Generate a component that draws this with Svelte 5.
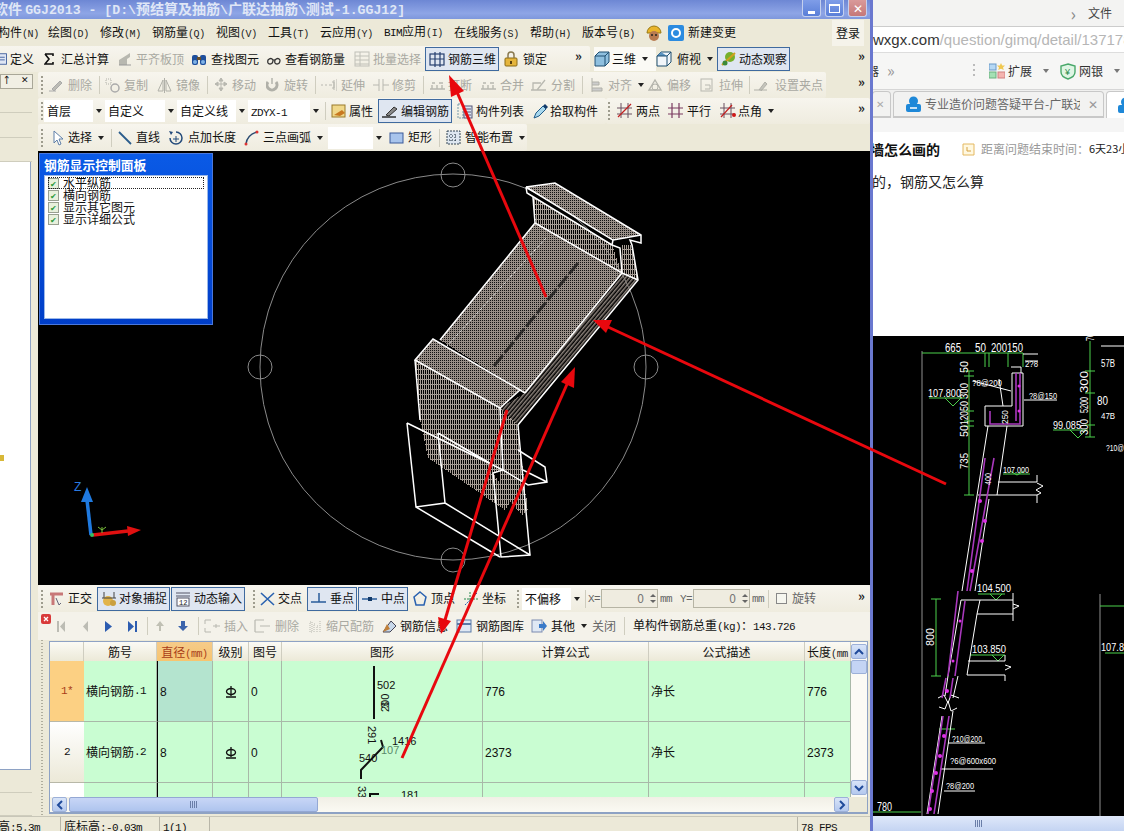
<script>
  const segs = (t) => String(t).match(/[\x00-\x7f]+|[^\x00-\x7f]+/g) || [];
  const isLat = (s) => /^[\x00-\x7f]/.test(s);

  const T = (x, lx, i, t, o = {}) => ({ x, lx, i, t, ...o });
  const S = (x) => ({ x, sep: true });
  const G = (x) => ({ x, grip: true });
  const C = (x, end, t) => ({ x, end, t, combo: true });

  // a band: flow of items, widths derived from the start of the next one
  function band(start, end, items, cls = '') {
    return {
      start, end, cls,
      items: items.map((it, k) => {
        const next = k + 1 < items.length ? items[k + 1].x : end;
        return { ...it, w: next - it.x, gapBefore: k === 0 ? it.x - start : 0 };
      })
    };
  }

  const menu = [
    ['构件', '(N)', 50], ['绘图', '(D)', 52], ['修改', '(M)', 52], ['钢筋量', '(Q)', 64], ['视图', '(V)', 52],
    ['工具', '(T)', 52], ['云应用', '(Y)', 64], ['BIM应用', '(I)', 70], ['在线服务', '(S)', 76], ['帮助', '(H)', 52], ['版本号', '(B)', 63]
  ];

  const row1 = [
    band(-4, 590, [
      T(-4, 10, 'def', '定义'),
      T(44, 61, 'sigma', '汇总计算'),
      T(117, 136, 'align', '平齐板顶', { d: 1 }),
      T(191, 211, 'find', '查找图元'),
      T(267, 285, 'glass', '查看钢筋量'),
      T(354, 373, 'batch', '批量选择', { d: 1 }),
      T(425, 448, 'grid3', '钢筋三维', { on: 1 }),
      T(504, 523, 'lock', '锁定'),
      { x: 575, more: true }
    ], 'lite'),
    band(590, 870, [
      T(594, 612, 'cube', '三维', { arrow: 1 }),
      T(656, 677, 'cube2', '俯视', { arrow: 1 }),
      T(717, 739, 'orbit', '动态观察', { on: 1 }),
      { x: 858, more: true }
    ], 'withhi')
  ];

  const row2 = [
    band(38, 826, [
      G(41),
      T(48, 68, 'del', '删除', { d: 1 }), S(99),
      T(105, 124, 'copy', '复制', { d: 1 }),
      T(157, 176, 'mirror', '镜像', { d: 1 }), S(207),
      T(214, 232, 'move', '移动', { d: 1 }),
      T(266, 284, 'rot', '旋转', { d: 1 }), S(315),
      T(321, 341, 'ext', '延伸', { d: 1 }),
      T(373, 392, 'trim', '修剪', { d: 1 }), S(423),
      T(430, 448, 'brk', '打断', { d: 1 }),
      T(481, 500, 'brk', '合并', { d: 1 }),
      T(531, 551, 'split', '分割', { d: 1 }), S(582),
      T(590, 608, 'alignl', '对齐', { d: 1, arrow: 1 }),
      T(648, 667, 'offset', '偏移', { d: 1 }),
      T(699, 719, 'stretch', '拉伸', { d: 1 }), S(749),
      T(753, 775, 'grip', '设置夹点', { d: 1 })
    ], 'lite'),
    band(826, 870, [{ x: 858, more: true }])
  ];

  const row3 = [
    band(38, 606, [
      G(41),
      C(44, 105, '首层'), C(105, 177, '自定义'), C(177, 248, '自定义线'), C(248, 322, 'ZDYX-1'),
      S(325),
      T(331, 349, 'prop', '属性'),
      T(378, 401, 'edit', '编辑钢筋', { on: 1 }),
      T(457, 476, 'list', '构件列表'),
      T(533, 550, 'pick', '拾取构件')
    ], 'lite'),
    band(606, 870, [
      G(608),
      T(617, 636, 'twop', '两点'),
      T(668, 687, 'para', '平行'),
      T(720, 738, 'ang', '点角', { arrow: 1 }),
      { x: 858, more: true }
    ], 'lite')
  ];

  const row4 = [
    band(38, 527, [
      G(41),
      T(52, 68, 'sel', '选择', { arrow: 1 }), S(111),
      T(118, 136, 'line', '直线'),
      T(168, 188, 'addl', '点加长度'),
      T(244, 263, 'arc', '三点画弧', { arrow: 1 }),
      C(328, 385, ''),
      T(389, 408, 'rect', '矩形'), S(439),
      T(446, 465, 'smart', '智能布置', { arrow: 1 })
    ], 'lite')
  ];

  const snap = [
    band(38, 870, [
      G(41),
      T(49, 68, 'ortho', '正交'),
      T(97, 119, 'osnap', '对象捕捉', { on: 1 }),
      T(171, 194, 'dyn', '动态输入', { on: 1 }),
      G(253),
      T(260, 278, 'cross', '交点'),
      T(307, 330, 'perp', '垂点', { on: 1 }),
      T(358, 381, 'mid', '中点', { on: 1 }),
      T(413, 431, 'vert', '顶点'),
      T(463, 482, 'coord', '坐标'),
      G(517),
      C(522, 583, '不偏移'),
      S(585),
      { x: 588, plain: 'X=' },
      { x: 601, spin: 57 },
      { x: 660, plain: 'mm' },
      { x: 680, plain: 'Y=' },
      { x: 693, spin: 57 },
      { x: 752, plain: 'mm' },
      S(768),
      { x: 776, check: true },
      { x: 792, plain: '旋转' },
      { x: 858, more: true }
    ], 'lite')
  ];

  const rebar = [
    band(38, 870, [
      { x: 40, closer: true },
      T(56, 82, 'first', ''),
      T(82, 105, 'prev', ''),
      T(105, 128, 'next', ''),
      T(128, 147, 'last', ''), S(147),
      T(155, 178, 'up', ''),
      T(178, 198, 'down', ''), S(198),
      T(204, 224, 'ins', '插入', { d: 1 }),
      T(254, 275, 'rm', '删除', { d: 1 }),
      T(308, 326, 'scale', '缩尺配筋', { d: 1 }),
      T(382, 400, 'info', '钢筋信息'),
      T(456, 476, 'lib', '钢筋图库'),
      T(531, 551, 'other', '其他', { arrow: 1 }),
      { x: 592, plain: '关闭' }, S(624),
      { x: 633, plain: '单构件钢筋总重(kg)：143.726' }
    ], 'lite2')
  ];

  const ICONS = {
    def: '<rect x="0" y="2" width="12" height="12" fill="#dfe6f4" stroke="#3a5a9a"/><path d="M2 6h8M2 9h8" stroke="#3a5a9a"/>',
    sigma: '<path d="M1 3h8v2M1 3l4 5-4 5h8v-2" fill="none" stroke="#111" stroke-width="1.6"/>',
    align: '<path d="M2 14V9l8-5 3-2v4l-3 2v6z" fill="#b8b8b0"/><path d="M2 14h12" stroke="#999"/>',
    find: '<rect x="1" y="4" width="6" height="10" rx="2" fill="#1f4f9c"/><rect x="9" y="4" width="6" height="10" rx="2" fill="#1f4f9c"/><rect x="6" y="6" width="4" height="3" fill="#6a4f2a"/><circle cx="4" cy="11" r="2" fill="#7fb2e6"/><circle cx="12" cy="11" r="2" fill="#7fb2e6"/>',
    glass: '<path d="M1 9q3-3 5 0q0 4-3 4t-2-4zM8 9q3-3 5 0q0 4-3 4t-2-4z" fill="none" stroke="#333" stroke-width="1.3"/><path d="M6 9h2" stroke="#333"/>',
    batch: '<g stroke="#c0c0b8" fill="none"><rect x="1" y="1" width="14" height="14"/><path d="M1 5h14M1 9h14M1 13h14M6 1v14"/></g>',
    grid3: '<g stroke="#27406f" fill="none" stroke-width="1.2"><rect x="1" y="3" width="14" height="11"/><path d="M1 8h14M6 1v15M11 1v15"/></g>',
    lock: '<rect x="1" y="7" width="12" height="8" rx="1" fill="#e5b53c" stroke="#8a6a14"/><path d="M4 7V4a3 3 0 016 0v3" fill="none" stroke="#8a7a50" stroke-width="1.5"/><rect x="6" y="10" width="2" height="3" fill="#5a4210"/>',
    cube: '<path d="M1 5l4-4h10v10l-4 4H1z" fill="#8fc0df" stroke="#1f4f70"/><path d="M1 5h10v10M11 5l4-4" fill="none" stroke="#1f4f70"/>',
    cube2: '<path d="M1 5l4-4h10v10l-4 4H1z" fill="#f2f6fa" stroke="#1f4f70"/><path d="M5 1l6 4h-10z" fill="#5b93c0"/><path d="M1 5h10v10M11 5l4-4" fill="none" stroke="#1f4f70"/>',
    orbit: '<circle cx="9" cy="6" r="5" fill="#77b02c"/><path d="M1 14L14 2" stroke="#d0a020" stroke-width="2"/><circle cx="4" cy="12" r="2.5" fill="#3d8a38"/>',
    del: '<path d="M1 14h7M4 12l8-8 2 2-8 8z" fill="#bcbcb4" stroke="#aaa"/>',
    copy: '<rect x="1" y="2" width="5" height="5" fill="none" stroke="#b0b0a8" stroke-dasharray="1 1"/><circle cx="10" cy="11" r="4" fill="none" stroke="#aaa" stroke-width="1.5"/>',
    mirror: '<path d="M1 14L6 3v11zM14 14L9 3v11zM7.5 1v15" fill="none" stroke="#b0b0a8"/>',
    move: '<path d="M7 1v13M1 7h12M7 1L5 4h4zM7 14l-2-3h4zM1 7l3-2v4zM13 7l-3-2v4z" stroke="#b8b8b0" fill="#b8b8b0"/>',
    rot: '<path d="M2 5a5 5 0 108 0" fill="none" stroke="#b0b0a8" stroke-width="3"/><path d="M6 1v6" stroke="#c4c4bc" stroke-width="2"/>',
    ext: '<path d="M0 8h2M4 8h2M8 8h3M13 3v10M16 2v12M11 5h2v6h-2" fill="none" stroke="#b8b8b0"/>',
    trim: '<path d="M0 8h6M10 8h6M6 2v12M10 2v12" fill="none" stroke="#b8b8b0"/>',
    brk: '<path d="M0 12h15M2 12V8M7 12V8M12 12V8M2 6h3M9 6h4" fill="none" stroke="#b8b8b0" stroke-width="1.4"/>',
    split: '<path d="M0 13h15M2 13V6h8M6 13l8-10" fill="none" stroke="#b8b8b0" stroke-width="1.3"/>',
    alignl: '<path d="M2 1v14M2 5h7v3H2M2 11h10v3H2" fill="#ccc" stroke="#b0b0a8"/>',
    offset: '<path d="M1 13L7 3l6 10z" fill="none" stroke="#b4b4ac" stroke-width="1.4"/><circle cx="7" cy="10" r="3" fill="none" stroke="#b4b4ac"/>',
    stretch: '<rect x="2" y="2" width="11" height="12" fill="none" stroke="#b8b8b0"/><path d="M6 8h5v4H6" fill="none" stroke="#b8b8b0"/>',
    grip: '<path d="M1 13h13M6 13l6-8 2 2-6 7" fill="#c4c4bc" stroke="#b0b0a8"/>',
    prop: '<rect x="1" y="2" width="13" height="12" fill="#f0d88a" stroke="#9a7a2a"/><path d="M3 12l8-5 3 3-5 3z" fill="#c87820"/>',
    edit: '<path d="M0 14h14" stroke="#222" stroke-width="1.4"/><path d="M4 12l8-8 3 2-8 7z" fill="#888" stroke="#333"/>',
    list: '<rect x="1" y="1" width="5" height="14" fill="none" stroke="#79a" stroke-dasharray="2 1"/><rect x="7" y="3" width="8" height="12" fill="#dce6f2" stroke="#557"/><path d="M8 6h6M8 9h6M8 12h6" stroke="#557"/>',
    pick: '<path d="M1 15l2-5 7-7 3 3-7 7z" fill="#a8d8ee" stroke="#1f5a88"/><path d="M10 3l2-2 3 3-2 2z" fill="#123a6a"/>',
    twop: '<path d="M4 0v15M11 0v15M0 5h15M0 11h15" stroke="#6a5060"/><path d="M1 14L14 1" stroke="#c22020" stroke-width="1.2"/>',
    para: '<path d="M4 0v15M11 0v15M0 5h15M0 11h15" stroke="#7a3a60" stroke-width="1.2"/>',
    ang: '<path d="M4 0v15M11 0v15M0 5h15M0 11h15" stroke="#6a5060"/><path d="M1 14L12 2" stroke="#c22020" stroke-width="1.2"/><circle cx="14" cy="12" r="2" fill="#d01818"/>',
    sel: '<path d="M2 1v12l3-3 2 5 2-1-2-5h4z" fill="#fff" stroke="#5f7fa8"/>',
    line: '<path d="M1 2l12 12" stroke="#2a5c8c" stroke-width="1.8"/>',
    addl: '<path d="M8 2a6 6 0 11-6 6" fill="none" stroke="#234a7a" stroke-width="1.5"/><path d="M8 6v6M5 9h6" stroke="#234a7a"/><path d="M1 1l4 1-2 3z" fill="#234a7a"/>',
    arc: '<path d="M2 14Q3 5 13 2" fill="none" stroke="#2a4a70" stroke-width="1.5"/><circle cx="2" cy="14" r="1.5" fill="#d33"/><circle cx="13" cy="2" r="1.5" fill="#d33"/>',
    rect: '<rect x="1" y="3" width="13" height="10" fill="#a8c4ec" stroke="#3a5a9a"/>',
    smart: '<rect x="1" y="1" width="13" height="13" fill="#dde6f0" stroke="#345" stroke-dasharray="2 1"/><path d="M5 4v7M9 4v7M3 6h9M3 10h9" stroke="#123" stroke-dasharray="1 2"/>',
    ortho: '<path d="M1 3h13M4 3v11" stroke="#c87878" stroke-width="3" fill="none"/><path d="M7 7l3 7 2-2" fill="#eee" stroke="#667"/>',
    osnap: '<path d="M3 1v6M13 1v6" stroke="#444"/><circle cx="7" cy="10" r="5" fill="#e2b44a"/><circle cx="12" cy="12" r="3" fill="#caa040"/><path d="M1 7h14" stroke="#444"/>',
    dyn: '<path d="M1 2h14M1 5h14" stroke="#556" fill="none"/><rect x="2" y="7" width="12" height="8" fill="#fff" stroke="#556"/><text x="4" y="14" font-size="7" font-family="Liberation Mono" fill="#222">12</text>',
    cross: '<path d="M1 2l13 12M14 2L1 14" stroke="#2a62b0" stroke-width="1.6"/>',
    perp: '<path d="M0 11h15M8 2v9" stroke="#2a5c9a" stroke-width="1.5"/>',
    mid: '<path d="M0 8h15" stroke="#2a5c9a" stroke-width="1.5"/><rect x="6" y="6" width="4" height="4" fill="#123a6a"/>',
    vert: '<path d="M7 1l6 5-2 8H3L1 6z" fill="none" stroke="#2a62b0" stroke-width="1.5"/>',
    coord: '<path d="M7 1v14M1 8h14" stroke="#2a8a50" stroke-dasharray="2 1"/><path d="M2 14l12-12" stroke="#2a62b0" stroke-dasharray="2 1"/>',
    first: '<path d="M1 1h2v11H1zM9 1v11L4 6.5z" fill="#bcbcb4" transform="translate(0 2)"/>',
    prev: '<path d="M6 3v11L1 8.5z" fill="#bcbcb4"/>',
    next: '<path d="M0 3v11l7-5.5z" fill="#2c5cb0"/>',
    last: '<path d="M0 3v11l6-5.5zM7 3h2v11H7z" fill="#2c5cb0"/>',
    up: '<path d="M4 13V8H1l4-5 4 5H6v5z" fill="#c0c0b4"/>',
    down: '<path d="M3 3v5H0l5 5 5-5H7V3z" fill="#3c64ac"/>',
    ins: '<path d="M1 2h6M1 14h6M1 2v4M1 10v4M9 8h7M12 6v4" fill="none" stroke="#b8b8b0"/>',
    rm: '<path d="M1 2h9M1 14h9M1 2v12M6 8h10" fill="none" stroke="#b8b8b0" stroke-width="1.2"/>',
    scale: '<path d="M2 14V4h2v10zM6 14V6h1M9 14V8h1M12 14V2" stroke="#b8b8b0" fill="none" stroke-dasharray="1 1"/>',
    info: '<path d="M1 14L9 3l5 5-6 6z" fill="#c8d8ea" stroke="#445"/><path d="M1 14l4-8 3 5z" fill="#c0803a"/>',
    lib: '<rect x="1" y="2" width="14" height="12" fill="#dfe8f4" stroke="#5a7aa8"/><path d="M1 6h14" stroke="#5a7aa8" stroke-width="2"/>',
    other: '<rect x="1" y="2" width="10" height="12" fill="#dfe8f4" stroke="#7a8ab0"/><path d="M8 6h4V3l4 5-4 5v-3H8z" fill="#3a7ac8"/>'
  };

  const cols = [
    { t: '筋号' }, { t: '直径', u: '(mm)', cur: 1 }, { t: '级别' }, { t: '图号' }, { t: '图形' },
    { t: '计算公式' }, { t: '公式描述' }, { t: '长度', u: '(mm' }
  ];

  const cadLabels = [
    [945, 351, 16, '665', 12], [975, 351, 11, '50', 12], [991, 351, 32, '200150', 12], [1025, 366, 13, '2?8', 9],
    [928, 396, 33, '107.800', 11], [972, 385, 30, '?8@200', 9], [1029, 398, 28, '?8@150', 9], [1053, 428, 28, '99.085', 11],
    [1003, 472, 26, '107.000', 9], [977, 591, 34, '104.500', 11], [972, 652, 34, '103.850', 11], [952, 741, 30, '?10@200', 9],
    [950, 763, 46, '?6@600x600', 9], [946, 788, 28, '?8@200', 9], [877, 810, 15, '780', 12], [1101, 366, 14, '57B', 10],
    [1101, 418, 14, '47B', 9], [1097, 404, 11, '80', 12], [1106, 450, 18, '?10@', 9], [1101, 650, 23, '107.8', 11]
  ];
  const cadV = [
    [968, 372, 12, '50', 11], [968, 398, 16, '300', 11], [968, 410, 10, '50', 11], [968, 424, 14, '120', 11], [968, 436, 12, '50', 11],
    [968, 468, 16, '735', 11], [1008, 423, 14, '250', 9], [991, 484, 12, '400', 9], [934, 645, 18, '800', 11], [1094, 340, 8, '70', 11],
    [1088, 392, 22, '300', 11], [1088, 412, 16, '5200', 11], [1088, 434, 16, '300', 11]
  ];
</script>

{#snippet txt(t)}
  {#each segs(t) as s}<span class:lat={isLat(s)}>{s}</span>{/each}
{/snippet}

{#snippet grade()}
  <svg width="12" height="12" viewBox="0 0 12 12"><ellipse cx="6" cy="5.5" rx="4.5" ry="3" fill="none" stroke="#111" stroke-width="1.3"/><path d="M6 0v10M1 11h10" stroke="#111" stroke-width="1.3"/></svg>
{/snippet}

{#snippet bandView(b)}
  <div class="band {b.cls}" style:width="{b.end - b.start}px" style:padding-left="{b.items[0].gapBefore}px" style:margin-left="{Math.min(b.start, 0)}px">
    {#each b.items as it}
      <div class="slot" style:width="{it.w}px">
        {#if it.sep}
          <i class="sep"></i>
        {:else if it.grip}
          <i class="gripper"></i>
        {:else if it.more}
          <span class="more">»</span>
        {:else if it.combo}
          <div class="combo" style:width="{it.end - it.x - 12}px">{@render txt(it.t)}</div>
          <span class="caret comboc"></span>
        {:else if it.plain}
          <span class="plain" class:grey={it.plain.length < 3}>{@render txt(it.plain)}</span>
        {:else if it.spin}
          <div class="spin" style:width="{it.spin}px"><span>0</span><b class="sp"><i></i><i class="dn"></i></b></div>
        {:else if it.check}
          <i class="chk"></i>
        {:else if it.closer}
          <svg class="closer" width="10" height="10" viewBox="0 0 10 10"><rect width="10" height="10" rx="2" fill="#d83a3a"/><path d="M3 3l4 4M7 3l-4 4" stroke="#fff" stroke-width="1.3"/></svg>
        {:else}
          <div class="tool" class:dis={it.d} class:on={it.on}>
            <span class="ico" style:width="{it.lx - it.x}px" class:ipad={it.on}>
              <svg width="16" height="16" viewBox="0 0 16 16">{@html ICONS[it.i] || ''}</svg>
            </span>
            {#if it.t}<span class="lbl">{@render txt(it.t)}</span>{/if}
            {#if it.arrow}<span class="caret"></span>{/if}
          </div>
        {/if}
      </div>
    {/each}
  </div>
{/snippet}

<div class="page">
  <section class="app">
    <header class="title">
      <span class="ttext">软件 <span class="tl">GGJ2013 - [D:\</span>预结算及抽筋<span class="tl">\</span>广联达抽筋<span class="tl">\</span>测试<span class="tl">-1.GGJ12]</span></span>
      <div class="winbtns">
        <span class="wb"><i class="wmin"></i></span>
        <span class="wb"><i class="wmax"></i></span>
        <span class="wb close">✕</span>
      </div>
    </header>

    <nav class="menu">
      {#each menu as m}
        <span class="mi" style:width="{m[2]}px">{@render txt(m[0])}<small>{m[1]}</small></span>
      {/each}
      <svg class="hat" width="18" height="18" viewBox="0 0 18 18">
        <path d="M2 9a7 7 0 0114 0z" fill="#e9b42a" stroke="#9a7a14"/><circle cx="9" cy="12" r="5" fill="#b87a50"/><circle cx="7" cy="11" r="1" fill="#222"/><circle cx="11" cy="11" r="1" fill="#222"/>
      </svg>
      <svg class="bk" width="16" height="16" viewBox="0 0 16 16">
        <rect width="16" height="16" rx="2" fill="#2b8be0"/><circle cx="8" cy="8" r="4" fill="none" stroke="#fff" stroke-width="2"/>
      </svg>
      <span class="mnew">新建变更</span>
      <span class="login">登录</span>
    </nav>

    <div class="tb t1">
      {#each row1 as b}{@render bandView(b)}{/each}
    </div>

    <div class="work">
      <aside class="pane">
        <div class="phead"><span class="pin">ᛏ</span><span class="px">✕</span></div>
        <div class="prow up"></div>
        <div class="prow up"></div>
        <div class="prow up"></div>
        <div class="pwhite"><i class="pmark"></i></div>
        <div class="prow"></div>
        <div class="prow"></div>
      </aside>

      <main class="mainc">
        <div class="tb t2">{#each row2 as b}{@render bandView(b)}{/each}</div>
        <div class="tb t3">{#each row3 as b}{@render bandView(b)}{/each}</div>
        <div class="tb t4">{#each row4 as b}{@render bandView(b)}{/each}</div>

        <div class="canvas">
          <svg class="scene" width="832" height="434" viewBox="38 151 832 434">
            <defs>
              <pattern id="pm" width="2" height="2" patternUnits="userSpaceOnUse">
                <rect width="2" height="2" fill="#978d86"/><rect width="1" height="1" fill="#111"/>
              </pattern>
              <pattern id="pv" width="2" height="5" patternUnits="userSpaceOnUse">
                <rect width="1" height="5" fill="#a69c94"/><rect x="1" y="4" width="1" height="1" fill="#a69c94"/>
              </pattern>
              <pattern id="pd" width="3" height="3" patternUnits="userSpaceOnUse" patternTransform="rotate(-50)">
                <rect width="3" height="1.5" fill="#8d837c"/>
              </pattern>
            </defs>
            <g fill="none" stroke="#8a8a8a" stroke-width="1">
              <circle cx="453" cy="367" r="193"/>
              <circle cx="453" cy="175" r="12"/>
              <circle cx="260" cy="367" r="12"/>
              <circle cx="646" cy="367" r="12"/>
              <circle cx="453" cy="560" r="12"/>
            </g>

            <g shape-rendering="crispEdges">
              <polygon points="526,187 555,183 641,235 613,240" fill="url(#pm)"/>
              <polygon points="533,197 612,245 622,273 535,223" fill="url(#pv)"/>
              <polygon points="622,245 632,245 638,280 622,273" fill="url(#pv)"/>
              <polygon points="440,340 535,223 622,273 525,393" fill="url(#pm)"/>
              <polygon points="622,273 638,280 518,425 500,408 525,393" fill="url(#pd)"/>
              <polygon points="415,360 433,339 520,390 500,408" fill="url(#pm)"/>
              <polygon points="415,360 500,408 503,470 493,473 520,512 523,510 518,440 523,485 505,510 428,458 420,420" fill="url(#pv)"/>
              <polygon points="500,408 518,425 523,470 528,510 522,515 500,490" fill="url(#pv)"/>
            </g>
            <path d="M578 263L494 366" stroke="#111" stroke-width="3" stroke-dasharray="14 3" opacity="0.7"/>
            <path d="M546 238L447 346" stroke="#ddd" stroke-width="1" stroke-dasharray="3 2"/>

            <g fill="none" stroke="#fff" stroke-width="1.5">
              <path d="M526 187L555 183L641 235V243L630 240L632 245L638 280L518 425"/>
              <path d="M526 187L527 193L612 245L613 240L526 187M613 240L641 235"/>
              <path d="M533 197L535 223L622 273L620 248L612 245"/>
              <path d="M535 223L440 340M622 273L525 393M622 273L638 280"/>
              <path d="M415 360L433 339L520 390L500 408ZM520 390L525 393"/>
              <path d="M415 360L420 420M500 408L503 470L493 473L501 557L530 555L518 425"/>
              <path d="M407 423L416 507L445 503L438 433M407 423L503 470M438 433L493 465M416 507L500 557M445 503L530 555"/>
              <path d="M518 450L545 467L547 482L528 485L503 470M523 470L547 482"/>
            </g>

            <g>
              <path d="M91 535L87 500" stroke="#1f7ae0" stroke-width="3.5"/>
              <path d="M81 502L87 487L93 502Z" fill="#1f7ae0"/>
              <text x="74" y="491" class="zlab">Z</text>
              <path d="M93 535L128 531" stroke="#e01010" stroke-width="3.5"/>
              <path d="M127 526L141 530L128 536Z" fill="#e01010"/>
              <path d="M102 527v6M98 527l4 3 4-3" stroke="#7cc23c" fill="none"/>
              <circle cx="92" cy="535" r="2" fill="#33c060"/>
            </g>
          </svg>

          <div class="cpanel">
            <div class="cptitle">钢筋显示控制面板</div>
            <div class="cplist">
              {#each ['水平纵筋', '横向钢筋', '显示其它图元', '显示详细公式'] as c, k}
                <div class="cpitem" class:focus={k === 0}><i class="cb">✔</i>{c}</div>
              {/each}
            </div>
          </div>
        </div>

        <div class="tb snap">{#each snap as b}{@render bandView(b)}{/each}</div>
        <div class="tb rebar">{#each rebar as b}{@render bandView(b)}{/each}</div>

        <div class="tablewrap">
          <i class="dockgrip"></i>
          <div class="tableframe">
            <div class="tablebody">
              <div class="vscroll">
                <span class="sbtn"><svg width="12" height="10" viewBox="0 0 12 10"><path d="M2 7l4-4 4 4" fill="none" stroke="#1f4a9a" stroke-width="2"/></svg></span>
                <span class="sthumb"></span>
                <span class="strack"></span>
                <span class="sbtn"><svg width="12" height="10" viewBox="0 0 12 10"><path d="M2 3l4 4 4-4" fill="none" stroke="#1f4a9a" stroke-width="2"/></svg></span>
              </div>
              <div class="gridt">
                <div class="hc first"></div>
                {#each cols as c}
                  <div class="hc" class:cur={c.cur}>{@render txt(c.t)}{#if c.u}<small>{c.u}</small>{/if}</div>
                {/each}

                <div class="rh act"><span class="lat">1*</span></div>
                <div class="c">{@render txt('横向钢筋.1')}</div>
                <div class="c ln sel">8</div>
                <div class="c ctr">{@render grade()}</div>
                <div class="c">0</div>
                <div class="c shape">
                  <svg width="200" height="60" viewBox="281 661 200 60">
                    <path d="M373 666V719" stroke="#111" stroke-width="2"/>
                    <text x="376" y="689" class="st">502</text>
                    <text x="0" y="0" class="st" transform="translate(388 712) rotate(-90)">200</text>
                    <text x="0" y="0" class="st" transform="translate(388 708) rotate(-90)">3</text>
                  </svg>
                </div>
                <div class="c">776</div>
                <div class="c">净长</div>
                <div class="c">776</div>

                <div class="rh"><span class="lat">2</span></div>
                <div class="c">{@render txt('横向钢筋.2')}</div>
                <div class="c ln">8</div>
                <div class="c ctr">{@render grade()}</div>
                <div class="c">0</div>
                <div class="c shape">
                  <svg width="200" height="60" viewBox="281 722 200 60">
                    <path d="M360 779V770L382 747L380 740" fill="none" stroke="#111" stroke-width="2"/>
                    <text class="st" transform="translate(367 726) rotate(90)" x="0" y="0">291</text>
                    <text x="391" y="745" class="st">1416</text>
                    <text x="380" y="754" class="st g">107</text>
                    <text x="358" y="762" class="st">540</text>
                  </svg>
                </div>
                <div class="c">2373</div>
                <div class="c">净长</div>
                <div class="c">2373</div>

                <div class="rh blank"></div>
                <div class="c"></div>
                <div class="c ln"></div>
                <div class="c"></div>
                <div class="c"></div>
                <div class="c shape">
                  <svg width="200" height="14" viewBox="281 783 200 14">
                    <text class="st" transform="translate(357 786) rotate(90)" x="0" y="0">33</text>
                    <path d="M369 797V794H378" fill="none" stroke="#111" stroke-width="2"/>
                    <text x="400" y="799" class="st">181</text>
                  </svg>
                </div>
                <div class="c"></div>
                <div class="c"></div>
                <div class="c"></div>
              </div>
            </div>
            <div class="hscroll">
              <span class="hbtn"><svg width="10" height="12" viewBox="0 0 10 12"><path d="M7 2L3 6l4 4" fill="none" stroke="#1f4a9a" stroke-width="2"/></svg></span>
              <span class="hthumb"><em></em></span>
              <span class="hspace"></span>
              <span class="hbtn"><svg width="10" height="12" viewBox="0 0 10 12"><path d="M3 2l4 4-4 4" fill="none" stroke="#1f4a9a" stroke-width="2"/></svg></span>
              <span class="hcorner"></span>
            </div>
          </div>
        </div>
      </main>
    </div>

    <footer class="status">
      <span class="st1">{@render txt('高:5.3m')}</span>
      <span class="st2">{@render txt('底标高:-0.03m')}</span>
      <span class="st3">{@render txt('1(1)')}</span>
      <span class="st4"></span>
      <span class="st5">{@render txt('78 FPS')}</span>
      <span class="st6"></span>
    </footer>
  </section>

  <aside class="browser">
    <div class="br-top"><span class="chev">›</span><span class="bfile">文件</span></div>
    <div class="br-url"><span class="dom">wxgx.com</span><span class="path">/question/gimq/detail/137178</span></div>
    <div class="br-bm">
      <span class="bmc">器</span><span class="bmm">»</span>
      <i class="bmdots"></i>
      <svg width="16" height="16" viewBox="0 0 16 16"><rect x="0" y="1" width="7" height="6" fill="#b6d8f4" stroke="#6a9ac8"/><rect x="0" y="9" width="7" height="6" fill="#a4e0b4" stroke="#6ab080"/><rect x="9" y="9" width="7" height="6" fill="#f4b4b0" stroke="#d08080"/><path d="M12 0l1.2 2.5H16l-2 2 .8 2.6-2.8-1.3-2.8 1.3.8-2.6-2-2h2.8z" fill="#f0c850"/></svg>
      <span class="bmt">扩展</span><span class="bma"></span>
      <svg class="shield" width="16" height="17" viewBox="0 0 16 17"><path d="M8 1l7 2v6c0 4-4 6-7 7-3-1-7-3-7-7V3z" fill="#dff5e4" stroke="#49a86a" stroke-width="1.4"/><text x="5" y="12" font-size="9" font-family="Liberation Sans" fill="#2a8a4a">¥</text></svg>
      <span class="bmt">网银</span><span class="bma"></span>
    </div>
    <div class="br-tabs">
      <div class="btab cut"><span>✕</span></div>
      <div class="btab"><svg class="tico" width="15" height="16" viewBox="0 0 15 16"><circle cx="7.5" cy="5" r="4.5" fill="#1e88d8"/><rect x="0" y="8" width="15" height="8" rx="2" fill="#1e88d8"/><path d="M4 12h7" stroke="#fff" stroke-width="1.5"/></svg><span class="ttl">专业造价问题答疑平台-广联达</span><span class="tx">✕</span></div>
      <div class="btab active"><svg class="tico" width="15" height="16" viewBox="0 0 15 16"><circle cx="7.5" cy="5" r="4.5" fill="#1e88d8"/><rect x="0" y="8" width="15" height="8" rx="2" fill="#1e88d8"/></svg></div>
    </div>
    <div class="br-gap"></div>
    <div class="br-content">
      <div class="q1"><span class="qt">墙怎么画的</span><svg class="clock" width="13" height="13" viewBox="0 0 13 13"><path d="M1 1h11v11H1z" fill="#fff8e0" stroke="#e4b860"/><path d="M5 4v4h4" fill="none" stroke="#d4a040"/></svg><span class="qg">距离问题结束时间：</span><span class="qd">6天23小</span></div>
      <p class="q2">的，钢筋又怎么算</p>
    </div>
    <div class="cad">
      <svg width="251" height="480" viewBox="873 335 251 480">
        <g stroke="#909090" fill="none">
          <path d="M922 350V815M1100 593V815"/>
        </g>
        <g stroke="#4cd24c" fill="none">
          <path d="M922 352H1023M985 352v14M989 352v14M1008 352v14M1023 352v14"/>
          <path d="M969 370V494M964 370h10M964 375h10M964 410h10M964 420h10M964 425h10M964 494h10"/>
          <path d="M929 397H965M945 397l8 8 8-8"/>
          <path d="M1003 473H1030M1017 474l-7-4M1017 474l7-4" />
          <path d="M1090 340V436M1085 370h10M1085 392h10M1085 424h10M1085 436h10"/>
          <path d="M1053 429H1088M1070 429l8 8 8-8"/>
          <path d="M978 593H1005M990 593l6 6 6-6"/>
          <path d="M936 598V675M931 598h10M931 675h10"/>
          <path d="M970 654H1005M992 654l6 6 6-6"/>
          <path d="M939 728H955"/>
          <path d="M873 811H921"/>
          <path d="M1100 605H1124M1105 652H1124"/>
        </g>
        <g fill="none" stroke="#fff">
          <path d="M1101 345H1124"/>
          <path d="M1012 372H1023V425H985V405H1012Z"/>
          <path d="M1011 366H1021V372"/>
          <path d="M988 425L962 590M1007 425L997 494M989 498L975 590"/>
          <path d="M973 380L1011 390M1024 399H1057M999 378L1003 405M1023 353H1038M1025 360H1038"/>
          <path d="M998 481H1037V474M978 494H1037V502M1037 482l6 3-7 4 5 3-4 2"/>
          <path d="M961 599H1013V592M1013 599V620M977 613H1013M1013 603l6 2-6 3"/>
          <path d="M961 599L948 675M980 599L977 613L967 674H1005V680M968 660H1005V654M1005 664l6 2-6 3"/>
          <path d="M948 675L945 695M958 675L953 697M942 715L927 813M953 710L938 813"/>
          <path d="M938 697l6-3 4 8 3-8 8 3M939 706l6 2 3-8 3 10 6-3"/>
          <path d="M948 742H985M940 768H993M944 790H975"/>
        </g>
        <g fill="none" stroke="#a838bc" stroke-width="1.6">
          <path d="M1016 372V420M1020 372V423H990V410"/>
          <path d="M985 457L967 590M994 457L970 590"/>
          <path d="M958 590L948 675M965 600L955 675M946 677L942 697M953 677L950 697"/>
          <path d="M943 715L928 813M949 715L934 813"/>
        </g>
        <g fill="#e030e8">
          <circle cx="1019" cy="410" r="1.5"/><circle cx="1019" cy="385" r="1.5"/>
          <circle cx="980" cy="500" r="2"/><circle cx="985" cy="520" r="2"/><circle cx="982" cy="540" r="2"/><circle cx="972" cy="570" r="2"/>
          <circle cx="960" cy="620" r="1.5"/><circle cx="953" cy="660" r="1.5"/><circle cx="947" cy="690" r="2"/>
          <circle cx="944" cy="735" r="2"/><circle cx="940" cy="755" r="2"/><circle cx="936" cy="772" r="2"/><circle cx="932" cy="790" r="2"/><circle cx="930" cy="808" r="2"/>
        </g>
        <g class="cadt">
          {#each cadLabels as l}
            <text x={l[0]} y={l[1]} textLength={l[2]} lengthAdjust="spacingAndGlyphs" font-size={l[4]}>{l[3]}</text>
          {/each}
          {#each cadV as l}
            <text transform="translate({l[0]} {l[1]}) rotate(-90)" textLength={l[2]} lengthAdjust="spacingAndGlyphs" font-size={l[4]}>{l[3]}</text>
          {/each}
        </g>
      </svg>
    </div>
    <div class="br-scroll"><em></em></div>
  </aside>

  <svg class="arrows" width="1124" height="831" viewBox="0 0 1124 831">
    <g fill="#e8080e">
      <path d="M546 297L457 92" stroke="#e8080e" stroke-width="3"/>
      <path d="M449 75L464 91L451 97Z"/>
      <path d="M946 484L608 327" stroke="#e8080e" stroke-width="3"/>
      <path d="M593 320L612 320L606 333Z"/>
      <path d="M402 758L568 382" stroke="#e8080e" stroke-width="3"/>
      <path d="M575 367L574 388L561 382Z"/>
      <path d="M507 410L445 620" stroke="#e8080e" stroke-width="3"/>
      <path d="M441 634L438 617L451 621Z"/>
    </g>
  </svg>
</div>

<style>
  :global(body) { margin: 0; background: #000; }
  .page {
    position: relative; display: flex; width: 1124px; height: 831px; overflow: hidden;
    font: 12px/1.2 "Noto Sans CJK SC", "Liberation Sans", sans-serif; color: #111;
  }
  .lat { font-family: "Liberation Mono", monospace; font-size: 11px; letter-spacing: -0.6px; }
  small { font-family: "Liberation Mono", monospace; font-size: 10px; letter-spacing: -0.4px; color: #222; }

  .app { width: 870px; flex: none; display: flex; flex-direction: column; background: #ece9d8; border-right: 3px solid #6a78cf; }

  .title {
    height: 19px; flex: none; display: flex; justify-content: space-between; align-items: flex-start;
    background: linear-gradient(#6d87d4, #8ea5e6 70%, #7e97dc); color: #dfe6f6; overflow: hidden; white-space: nowrap;
  }
  .ttext { font-size: 14px; font-weight: 700; margin-left: -6px; line-height: 15px; padding-top: 1px; }
  .tl { font-family: "Liberation Mono", monospace; font-size: 13.2px; }
  .winbtns { display: flex; gap: 4px; margin-right: 3px; }
  .wb { width: 19px; height: 17px; display: flex; align-items: center; justify-content: center; border-radius: 0 0 3px 3px;
    background: linear-gradient(#7f9de8, #5a7fd8); border: 1px solid #c4d0ee; border-top: 0; box-sizing: border-box; color: #fff; font-size: 12px; }
  .wb.close { background: linear-gradient(#d99a9a, #c57878); }
  .wmin { width: 7px; height: 3px; background: #fff; margin-top: 8px; }
  .wmax { width: 11px; height: 9px; border: 1px solid #fff; border-top-width: 2px; box-sizing: border-box; }

  .menu { height: 27px; flex: none; display: flex; align-items: center; margin-left: -2px; white-space: nowrap; }
  .mi { flex: none; }
  .hat { flex: none; }
  .bk { margin-left: 5px; flex: none; }
  .mnew { margin-left: 4px; }
  .login { margin-left: auto; margin-right: 6px; padding: 0 4px; background: #f5f3ea; height: 26px; line-height: 26px; }

  .tb { display: flex; flex: none; white-space: nowrap; overflow: hidden; }
  .t1 { height: 26px; }
  .t2, .t3 { height: 26px; }
  .t4 { height: 27px; }
  .snap { height: 27px; }
  .rebar { height: 28px; }
  .band { display: flex; align-items: center; height: 100%; flex: none; box-sizing: border-box; }
  .lite { background: linear-gradient(#f7f5ee, #efecdf); border-radius: 2px; }
  .lite2 { background: #f4f2ea; }
  .withhi .slot:first-child { background: #fbfaf5; }
  .slot { flex: none; display: flex; align-items: center; height: 24px; }

  .tool { display: flex; align-items: center; height: 24px; box-sizing: border-box; }
  .tool.on { background: #dfe6f1; border: 1px solid #3f6a9f; padding-right: 2px; }
  .ico { flex: none; display: flex; align-items: center; }
  .ipad { padding-left: 3px; box-sizing: border-box; margin-right: -1px; }
  .lbl { white-space: nowrap; }
  .dis { color: #a9a9a2; }
  .caret { display: inline-block; width: 0; height: 0; border: 3px solid transparent; border-top: 4px solid #222; border-bottom: 0; margin-left: 6px; }
  .comboc { margin-left: 3px; }
  .sep { width: 1px; height: 18px; background: #cfcdbf; }
  .gripper { width: 2px; height: 18px; background: repeating-linear-gradient(#9e9c8e 0 2px, transparent 2px 4px); }
  .more { font-weight: 700; font-size: 13px; color: #222; margin-top: -6px; }
  .combo { height: 22px; line-height: 22px; background: #fff; box-sizing: border-box; padding-left: 3px; overflow: hidden; }
  .plain { white-space: nowrap; }
  .plain.grey { color: #666; }
  .spin { height: 19px; border: 1px solid #b6b4a4; background: #efece0; box-sizing: border-box; display: flex; align-items: center; justify-content: flex-end; gap: 6px; color: #777; padding-right: 1px; }
  .spin .sp { display: flex; flex-direction: column; gap: 3px; }
  .spin .sp i { width: 0; height: 0; border: 3px solid transparent; border-top: 0; border-bottom: 3px solid #666; }
  .spin .sp i.dn { border-bottom: 0; border-top: 3px solid #666; }
  .chk { width: 9px; height: 9px; border: 1px solid #888; background: #f6f6ef; }
  .closer { margin-left: 1px; margin-top: -14px; }

  .work { flex: 1; display: flex; min-height: 0; }
  .pane { width: 38px; flex: none; display: flex; flex-direction: column; }
  .phead { height: 15px; width: 33px; flex: none; margin-top: 2px; display: flex; justify-content: space-between; border: 1px solid #a9a798; box-sizing: border-box; padding: 0 3px; font-size: 9px; background: #f1efe4; }
  .pin { font-weight: 700; }
  .prow { height: 23px; width: 32px; flex: none; border-bottom: 1px solid #cfcdbd; box-sizing: border-box; }
  .prow.up { height: 24.33px; }
  .pwhite { flex: 1; width: 31px; background: #fff; border-right: 1.5px solid #8ea2c4; border-bottom: 1.5px solid #8ea2c4; box-sizing: border-box; position: relative; }
  .pmark { position: absolute; left: 0; top: 293px; width: 4px; height: 6px; background: #d8b838; }

  .mainc { width: 832px; flex: none; display: flex; flex-direction: column; min-height: 0; }
  .canvas { height: 434px; flex: none; background: #000; position: relative; overflow: hidden; }
  .scene { display: block; }
  .zlab { font: 12px "Liberation Sans", sans-serif; fill: #2a7ae0; }

  .cpanel { position: absolute; left: 1px; top: 2px; width: 174px; height: 172px; background: linear-gradient(#0a5ae6, #003ec8); box-sizing: border-box; border: 1px solid #4a78dc; padding: 0 4px 5px; display: flex; flex-direction: column; }
  .cptitle { color: #fff; font-size: 12.8px; font-weight: 700; height: 21px; line-height: 21px; flex: none; white-space: nowrap; }
  .cplist { flex: 1; background: #fff; border: 1px solid #9cb8e8; padding: 1px 3px; box-sizing: border-box; }
  .cpitem { height: 12px; line-height: 12px; display: flex; align-items: center; gap: 4px; box-sizing: border-box; font-size: 12px; white-space: nowrap; }
  .cpitem.focus { outline: 1px dotted #222; outline-offset: -1px; }
  .cb { width: 11px; height: 11px; box-sizing: border-box; flex: none; border: 1px solid #99a090; background: #e8f0dc; color: #2a9a3a; font-size: 8px; line-height: 9px; text-align: center; font-style: normal; }

  .tablewrap { height: 176px; flex: none; display: flex; padding-right: 2px; box-sizing: border-box; }
  .dockgrip { width: 2px; margin: 0 6px 0 3px; background: repeating-linear-gradient(#b0ae9e 0 1px, transparent 1px 3px); }
  .tableframe { flex: 1; margin-top: 1px; border: 1px solid #8ea2c4; border-bottom-width: 2px; background: #fbfaf5; display: flex; flex-direction: column; box-sizing: border-box; min-width: 0; height: 173px; }
  .tablebody { flex: 1; display: flex; flex-direction: row-reverse; overflow: hidden; min-height: 0; }
  .gridt { flex: 1; display: grid; grid-template-columns: 34px 73px 56px 36px 33px 201px 166px 156px 46px; grid-template-rows: 19px 61px 61px 30px; overflow: hidden; background: #fff; align-content: start; }
  .hc { background: linear-gradient(#fbfaf4, #ece9d8); border-right: 1px solid #cfcdc0; text-align: center; line-height: 19px; white-space: nowrap; overflow: hidden; }
  .hc.cur { background: linear-gradient(#f5cb8a, #f7c46f); color: #a83c18; }
  .hc.cur small { color: #a83c18; }
  .c { background: #c9fdd2; border-right: 1px solid #a8b8a8; border-bottom: 1px solid #a8b8a8; display: flex; align-items: center; padding: 2px 0 0 2px; overflow: visible; font-size: 12px; white-space: nowrap; min-width: 0; box-sizing: border-box; font-family: "Liberation Sans", "Noto Sans CJK SC", sans-serif; }
  .c.ln { border-left: 1.5px solid #000; }
  .c.sel { background: #b4e4cf; }
  .c.ctr { justify-content: center; padding-left: 0; }
  .c.shape { padding: 0; position: relative; align-items: flex-start; }
  .rh { background: linear-gradient(#fff, #ece9d8); border-bottom: 1px solid #b8b8a8; display: flex; align-items: center; justify-content: center; padding-top: 2px; box-sizing: border-box; }
  .rh.act { background: #fcd083; color: #a83c18; }
  .rh.blank { background: #fff; }
  .st { font: 11px "Liberation Sans", sans-serif; fill: #111; }
  .st.g { fill: #5a8a6a; }

  .vscroll { width: 16px; flex: none; display: flex; flex-direction: column; background: #fbfaf5; padding: 2px 0; box-sizing: border-box; }
  .sbtn { height: 15px; background: linear-gradient(#d8e4f8, #b4c8ee); border: 1px solid #9cb0d8; box-sizing: border-box; display: flex; align-items: center; justify-content: center; border-radius: 2px; }
  .sthumb { height: 12px; background: #c4d4f4; border: 1px solid #9cb0d8; border-radius: 2px; margin-top: 1px; }
  .strack { flex: 1; }

  .hscroll { height: 15px; flex: none; display: flex; background: linear-gradient(#f1efe6, #fbfaf3); align-items: stretch; padding-left: 2px; }
  .hbtn { width: 15px; flex: none; background: linear-gradient(#d8e4f8, #b4c8ee); display: flex; align-items: center; justify-content: center; border: 1px solid #9cb0d8; box-sizing: border-box; border-radius: 2px; }
  .hthumb { width: 249px; margin-left: 2px; background: linear-gradient(#c8d6f6, #aec4ee); border: 1px solid #94a8d4; border-radius: 2px; box-sizing: border-box; display: flex; justify-content: center; align-items: center; }
  .hthumb em, .br-scroll em { width: 8px; height: 7px; background: repeating-linear-gradient(90deg, #6a7ea8 0 1px, transparent 1px 2px); }
  .hspace { flex: 1; }
  .hcorner { width: 18px; background: #ece9d8; }

  .status { height: 15px; flex: none; display: flex; align-items: flex-start; border-top: 1px solid #c8c6b8; box-sizing: border-box; line-height: 14px; overflow: hidden; white-space: nowrap; }
  .status > span { border-right: 1px solid #b8b6a8; height: 15px; box-sizing: border-box; flex: none; padding: 2px 0 0 3px; }
  .st1 { width: 66px; margin-left: -5px; }
  .st2 { width: 99px; }
  .st3 { width: 50px; }
  .st4 { width: 588px; }
  .st5 { width: 50px; border-right: 0 !important; }
  .st6 { flex: 1 !important; border: 0 !important; }

  .browser { flex: 1; display: flex; flex-direction: column; background: #fff; min-width: 0; overflow: hidden; white-space: nowrap; }
  .br-top { height: 27px; flex: none; background: #f3f3f2; display: flex; align-items: center; justify-content: flex-end; padding-right: 12px; color: #444; box-sizing: border-box; border-bottom: 1px solid #ccc; }
  .chev { font-size: 18px; color: #888; margin-right: 12px; line-height: 14px; }
  .br-url { height: 26px; flex: none; display: flex; align-items: center; background: #fff; font: 15px "Liberation Sans", sans-serif; border-bottom: 1px solid #ddd; box-sizing: border-box; width: 254px; overflow: hidden; }
  .dom { color: #333; }
  .path { color: #b6b6b6; }
  .br-bm { height: 37px; flex: none; display: flex; align-items: center; background: #f6f6f5; border-bottom: 1px solid #d6d6d6; box-sizing: border-box; }
  .br-bm > * { flex: none; }
  .bmc { margin-left: -6px; width: 13px; font-size: 12px; color: #333; }
  .bmm { font-size: 16px; color: #999; margin-left: 7px; width: 86px; }
  .bmdots { width: 2px; height: 14px; margin-right: 14px; background: repeating-linear-gradient(#bbb 0 2px, transparent 2px 5px); }
  .bmt { margin-left: 3px; color: #333; }
  .bma { width: 0; height: 0; border: 3.5px solid transparent; border-top: 4px solid #777; border-bottom: 0; margin-left: 11px; margin-right: 11px; }
  .br-tabs { height: 28px; flex: none; display: flex; align-items: flex-end; background: #f0f0ef; gap: 2px; }
  .btab { height: 27px; display: flex; align-items: center; box-sizing: border-box; border: 1px solid #c8c8c8; border-bottom: 2px solid #c8c8c8; border-radius: 4px 4px 0 0; background: #f2f2f1; color: #666; flex: none; }
  .btab.cut { width: 19px; margin-left: -1px; color: #aaa; font-size: 10px; padding-left: 3px; }
  .btab:nth-child(2) { width: 211px; padding-left: 12px; }
  .ttl { width: 155px; overflow: hidden; margin-left: 4px; font-size: 12px; }
  .tx { color: #999; margin-left: 8px; }
  .btab.active { flex: 1; background: #fff; padding-left: 11px; border-bottom: 0; }
  .br-gap { height: 14px; flex: none; background: #f5f5f5; }
  .br-content { height: 204px; flex: none; background: #fff; box-sizing: border-box; padding-top: 7px; }
  .q1 { display: flex; align-items: center; height: 20px; }
  .qt { font-size: 14px; font-weight: 700; margin-left: -3px; width: 92px; flex: none; color: #111; }
  .clock { flex: none; }
  .qg { color: #999; margin-left: 6px; width: 108px; flex: none; }
  .qd { color: #222; font-size: 11px; }
  .q2 { margin: 14px 0 0 -1px; font-size: 14px; color: #222; }
  .cad { height: 480px; flex: none; background: #000; overflow: hidden; }
  .cad svg { display: block; }
  .cadt text { font-family: "Liberation Sans", sans-serif; fill: #fff; }
  .br-scroll { flex: 1; background: linear-gradient(#dfe8fa, #c4d4f2); display: flex; justify-content: center; align-items: center; padding-right: 40px; }

  .arrows { position: absolute; left: 0; top: 0; pointer-events: none; }
</style>
